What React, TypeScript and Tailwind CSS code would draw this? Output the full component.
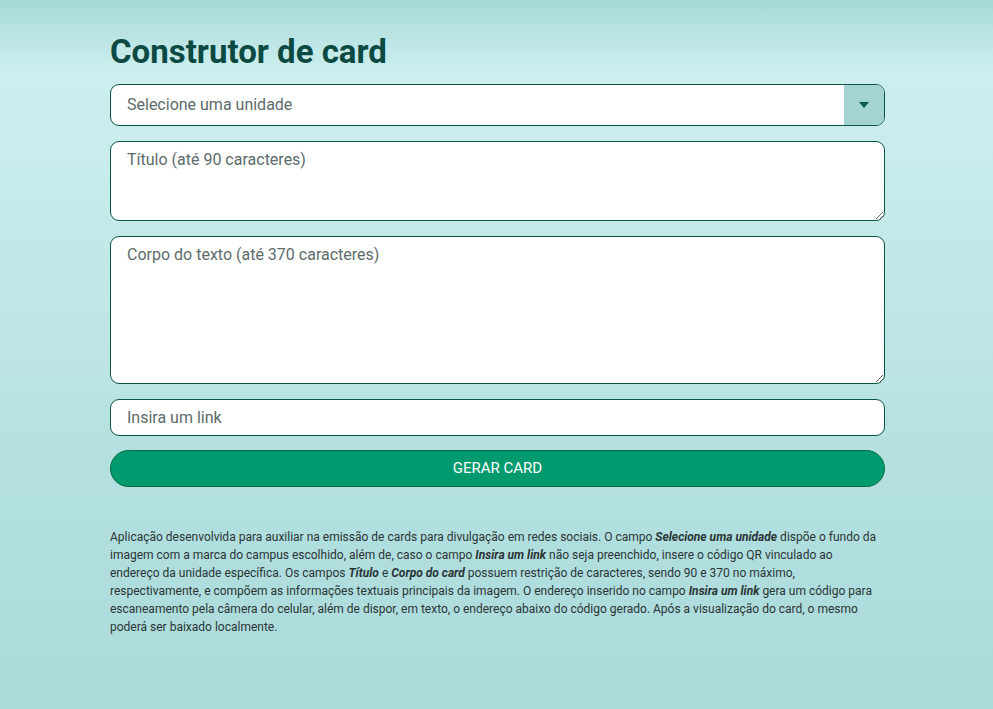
import React from 'react';

const App: React.FC = () => {
  return (
    <div
      className="min-h-[709px] w-full bg-[linear-gradient(180deg,#a6d9d9_0px,#cdeeee_70px,#c4e8e8_250px,#b2dfdf_500px,#acdada_709px)]"
      style={{ fontFamily: 'Roboto, "Liberation Sans", sans-serif' }}
    >
      <div className="ml-[110px] w-[775px] pt-[33px]">
        <h1 className="text-[33px] leading-[38px] font-bold text-[#0b4a42]">Construtor de card</h1>

        <div className="mt-[13px] flex flex-col">
          {/* Select */}
          <div className="flex h-[42px] overflow-hidden rounded-[9px] border border-[#0b5548] bg-white">
            <div className="flex flex-1 items-center pl-4 text-base text-[#5c6b6b]">Selecione uma unidade</div>
            <div className="flex w-[40px] items-center justify-center bg-[#a3d4d2]">
              <svg width="10" height="6" viewBox="0 0 10 6">
                <path d="M0 0H10L5 6Z" fill="#0b5a4a" />
              </svg>
            </div>
          </div>

          <textarea
            placeholder="Título (até 90 caracteres)"
            className="mt-[15px] h-[80px] w-full rounded-[9px] border border-[#0b5548] bg-white px-4 py-[6px] text-base text-[#333] placeholder:text-[#5c6b6b] outline-none"
          />

          <textarea
            placeholder="Corpo do texto (até 370 caracteres)"
            className="mt-[15px] h-[148px] w-full rounded-[9px] border border-[#0b5548] bg-white px-4 py-[6px] text-base text-[#333] placeholder:text-[#5c6b6b] outline-none"
          />

          <input
            placeholder="Insira um link"
            className="mt-[15px] h-[37px] w-full rounded-[9px] border border-[#0b5548] bg-white px-4 text-base text-[#333] placeholder:text-[#5c6b6b] outline-none"
          />

          <button className="mt-[14px] h-[37px] w-full rounded-full border border-[#0a6a3c] bg-[#009a6e] text-[15px] uppercase text-white">
            Gerar card
          </button>
        </div>

        <p className="mt-[41px] text-[12px] leading-[18px] text-[#2b3535]">
          Aplicação desenvolvida para auxiliar na emissão de cards para divulgação em redes sociais. O campo{' '}
          <b className="italic">Selecione uma unidade</b> dispõe o fundo da imagem com a marca do campus escolhido, além de, caso o campo{' '}
          <b className="italic">Insira um link</b> não seja preenchido, insere o código QR vinculado ao endereço da unidade específica. Os campos{' '}
          <b className="italic">Título</b> e <b className="italic">Corpo do card</b> possuem restrição de caracteres, sendo 90 e 370 no máximo,
          respectivamente, e compõem as informações textuais principais da imagem. O endereço inserido no campo{' '}
          <b className="italic">Insira um link</b> gera um código para escaneamento pela câmera do celular, além de dispor, em texto, o endereço
          abaixo do código gerado. Após a visualização do card, o mesmo poderá ser baixado localmente.
        </p>
      </div>
    </div>
  );
};

export default App;
